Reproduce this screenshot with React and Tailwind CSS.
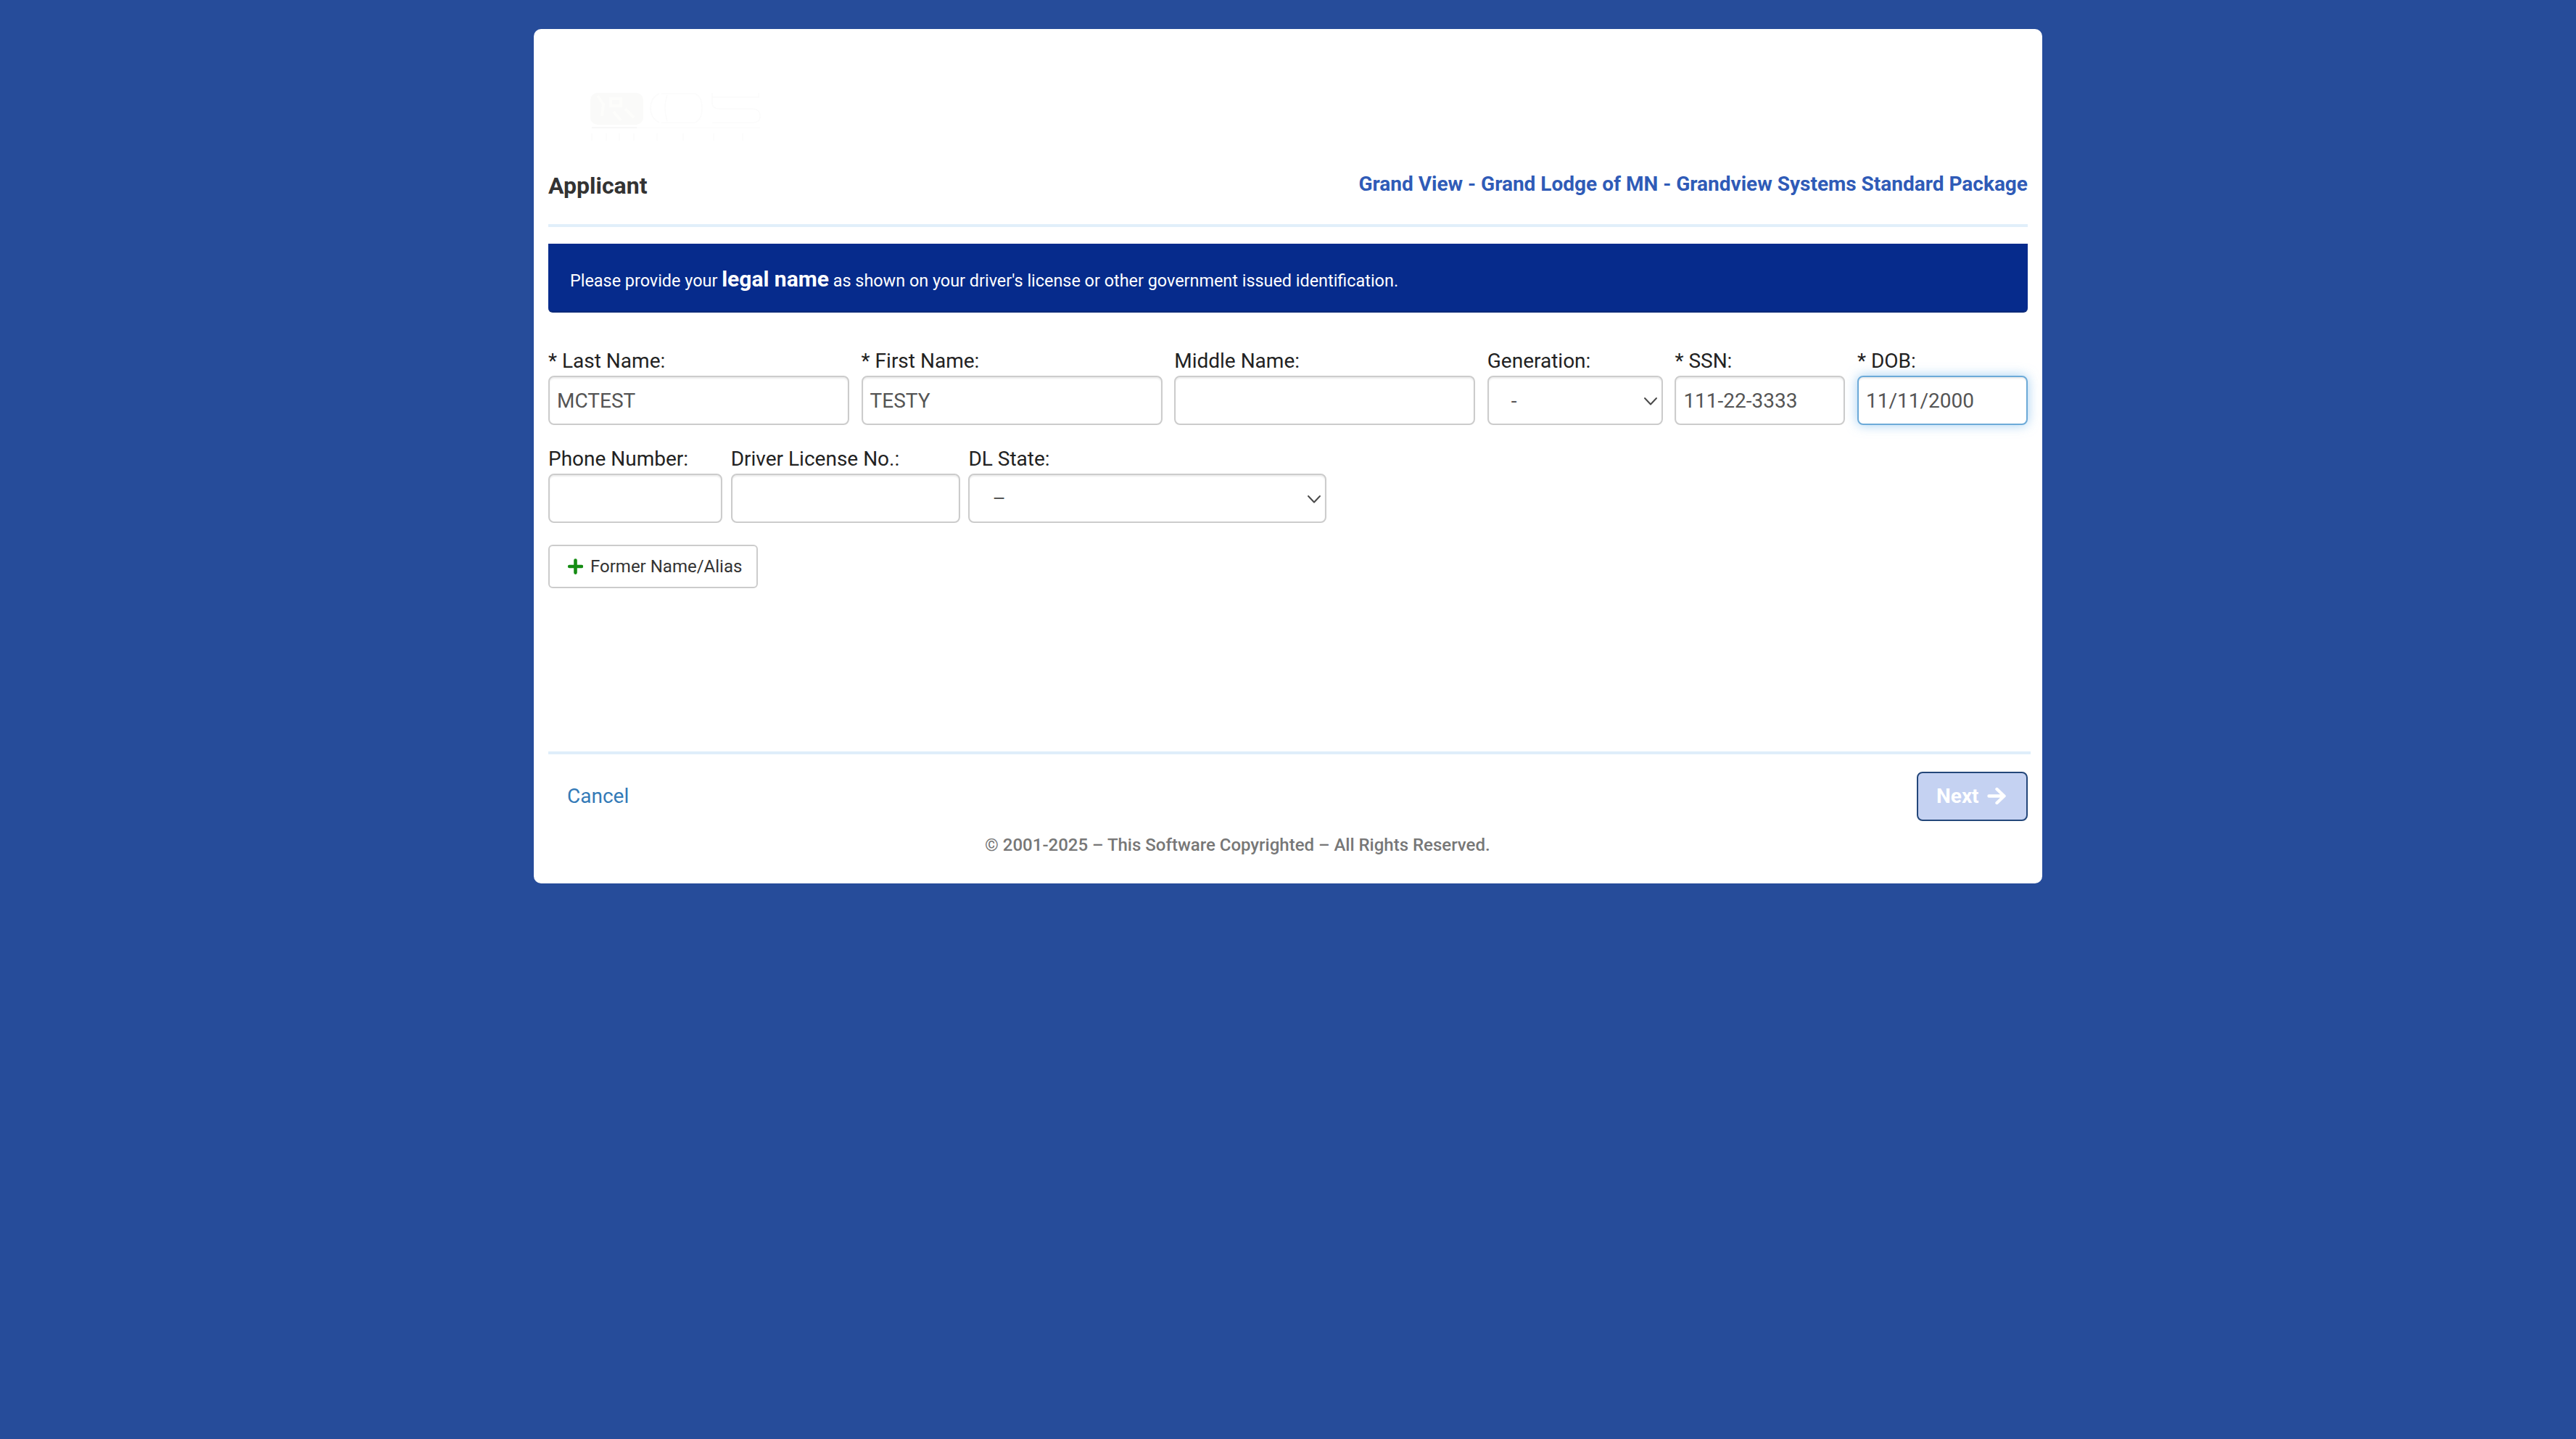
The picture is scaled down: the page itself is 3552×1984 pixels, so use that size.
import React from "react";

const INPUT =
  "h-[68px] w-full rounded-[8px] border-2 bg-white px-[10px] pt-px text-[28px] leading-[64px] text-[#555555]";

function Chevron() {
  return (
    <svg width="20" height="14" viewBox="0 0 20 14" fill="none" stroke="#4a4a4a" strokeWidth="2" strokeLinecap="round" strokeLinejoin="round">
      <path d="M2 3l8 8.5L18 3" />
    </svg>
  );
}

function Field({ label, value, className, select, focused }) {
  return (
    <div className={className}>
      <div className="h-10 whitespace-nowrap text-[28px] leading-10">{label}</div>
      {select ? (
        <div className={`${INPUT} flex items-center justify-between border-[#cccccc] pl-[31px] pr-[5px] shadow-[inset_0_2px_2px_rgba(0,0,0,0.075)]`}>
          <span>{value}</span>
          <Chevron />
        </div>
      ) : (
        <div
          className={`${INPUT} ${
            focused
              ? "border-[#6caad8] shadow-[inset_0_2px_2px_rgba(0,0,0,0.075),0_0_16px_rgba(102,175,233,0.6)]"
              : "border-[#cccccc] shadow-[inset_0_2px_2px_rgba(0,0,0,0.075)]"
          }`}
        >
          {value}
        </div>
      )}
    </div>
  );
}

function FadedLogo() {
  return (
    <svg className="ml-[56px] mt-[86px] h-[76px] w-[250px]" viewBox="0 0 250 76" fill="none">
      <rect x="2" y="2" width="73" height="44" rx="10" fill="#fafaf9" />
      <path d="M12 6l8 12-2 16M30 10h14v10H30zM34 28l10 12M50 24l12 12" stroke="#fdfdfb" strokeWidth="4" />
      <path d="M97 3q-12 6-12 20t12 20M108 5q-6 18 0 36M100 3h46q10 4 10 20t-10 20h-46" stroke="#fbfbfb" strokeWidth="1.5" />
      <path d="M170 8h64V2M170 2v14q0 8 10 8h44q12 0 12 10t-12 9h-54" stroke="#fbfbfb" strokeWidth="1.5" />
      <path d="M4 50h62" stroke="#f4f4f4" strokeWidth="1.5" />
      <path d="M66 50h170" stroke="#fcfcfc" strokeWidth="1.5" />
      <path d="M4 58v10M24 58v10M42 58v10M62 58v10M94 58v10M130 58v10M172 58v10M212 58v10" stroke="#fcfcfc" strokeWidth="2" />
    </svg>
  );
}

export default function App() {
  return (
    <div className="min-h-[1984px] w-full bg-[#264c9a] pt-10 font-['Roboto',sans-serif] text-[#222222]">
      <main className="mx-auto flex h-[1178px] w-[2080px] flex-col rounded-[10px] bg-white px-5">
        <FadedLogo />

        <header className="flex h-[111px] items-start justify-between border-b-4 border-[#e1effa]">
          <h1 className="mt-[34px] text-[32px] font-bold leading-10 text-[#333333]">Applicant</h1>
          <h2 className="mt-[32px] text-[28px] font-bold leading-10 text-[#2f5bb7]">
            Grand View - Grand Lodge of MN - Grandview Systems Standard Package
          </h2>
        </header>

        <div className="mt-[23px] flex h-[95px] items-center rounded-b-[6px] border-b-2 border-[#0b2a78] bg-[#062b8c] px-[30px] pt-[3px] text-[23.4px] text-white">
          <p>
            Please provide your <strong className="text-[30px] font-bold">legal name</strong> as shown on your driver's license or other
            government issued identification.
          </p>
        </div>

        <div className="mt-[47px] flex gap-[16.6px]">
          <Field className="w-[415px]" label="* Last Name:" value="MCTEST" />
          <Field className="w-[415px]" label="* First Name:" value="TESTY" />
          <Field className="w-[415px]" label="Middle Name:" />
          <Field className="w-[242px]" label="Generation:" value="-" select />
          <Field className="w-[235px]" label="* SSN:" value="111-22-3333" />
          <Field className="w-[235px]" label="* DOB:" value="11/11/2000" focused />
        </div>

        <div className="mt-[27px] flex gap-[11.7px]">
          <Field className="w-[240px]" label="Phone Number:" />
          <Field className="w-[316px]" label="Driver License No.:" />
          <Field className="w-[494px]" label="DL State:" value="–" select />
        </div>

        <button className="mt-[30px] flex h-[60px] w-[289px] items-center rounded-[6px] border-2 border-[#cccccc] bg-white pl-6 text-[24px] text-[#333333]">
          <svg width="22" height="22" viewBox="0 0 22 22" fill="none" stroke="#158c13" strokeWidth="4.6" strokeLinecap="round">
            <path d="M11.5 2.6v17M3.2 11h16.8" />
          </svg>
          <span className="ml-[10px]">Former Name/Alias</span>
        </button>

        <footer className="-mr-1 mt-[225px] flex flex-col border-t-4 border-[#dfeefa]">
          <div className="mt-6 flex h-[68px] items-center justify-between pl-[26px] pr-1">
            <a className="text-[28px] text-[#337ab7]">Cancel</a>
            <button className="flex h-[68px] w-[153px] items-center rounded-[8px] border-2 border-[#24477a] bg-[#c5d2f2] pl-[25px] text-[28px] font-bold text-white">
              Next
              <svg className="ml-[11px]" width="26" height="26" viewBox="0 0 26 26" fill="none" stroke="white" strokeWidth="4.4" strokeLinecap="round" strokeLinejoin="round">
                <path d="M2.5 12.5H23M13.5 3l10 9.5-10 9.5" />
              </svg>
            </button>
          </div>
          <p className="mt-[13px] pl-[602px] text-[24px] font-medium leading-10 text-[#777777]">
            © 2001-2025 – This Software Copyrighted – All Rights Reserved.
          </p>
        </footer>
      </main>
    </div>
  );
}
